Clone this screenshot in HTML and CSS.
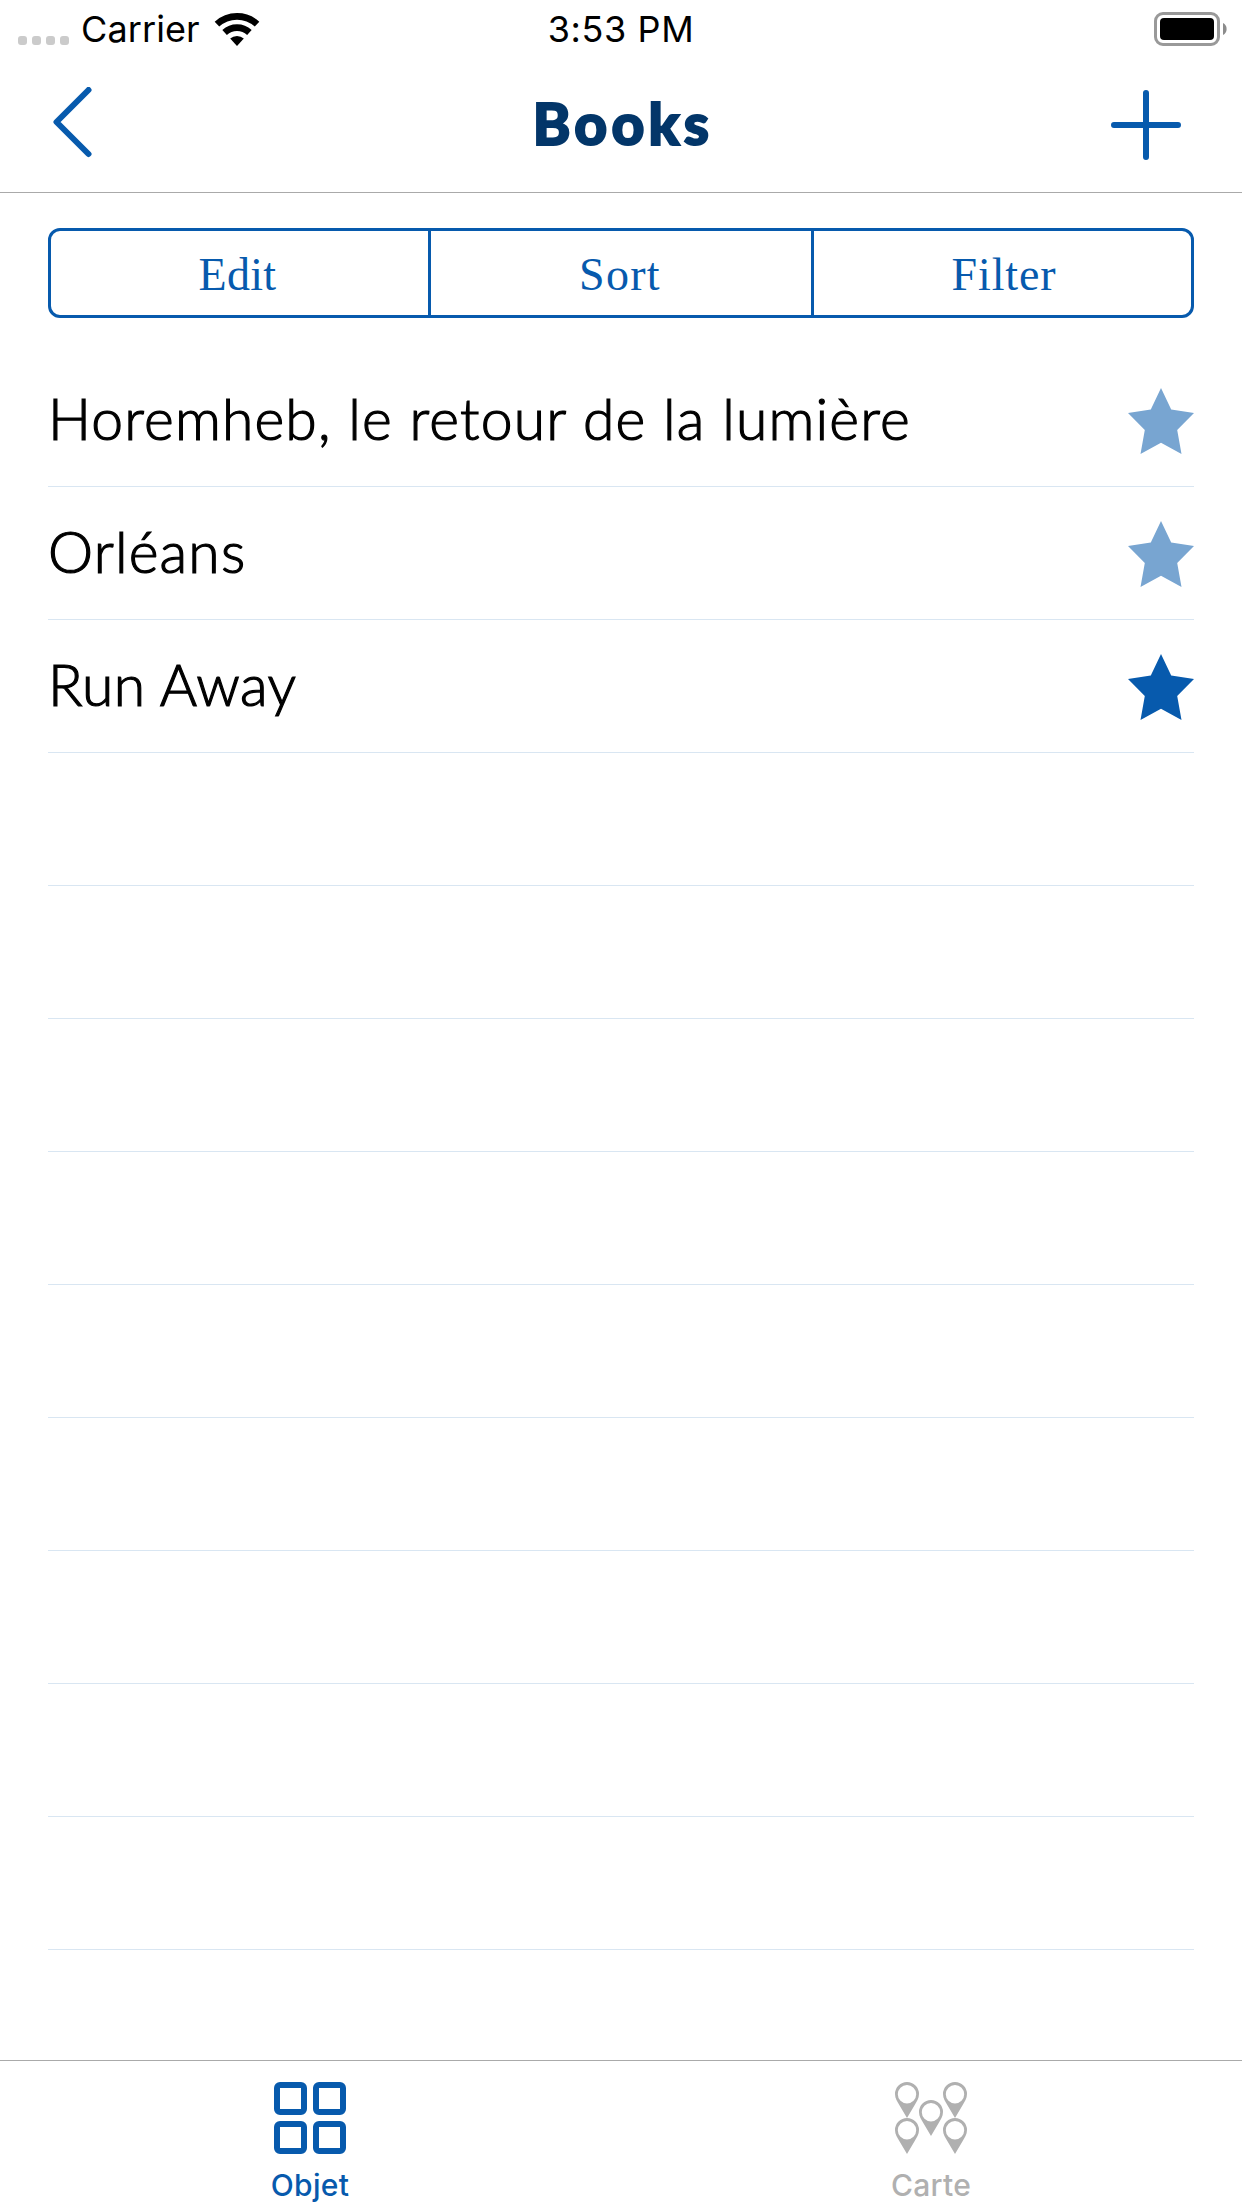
FILE: index.html
```html
<!DOCTYPE html>
<html lang="fr">
<head>
<meta charset="utf-8">
<title>Books</title>
<link rel="stylesheet" href="styles.css">
</head>
<body>
<svg class="defs" aria-hidden="true">
  <symbol id="star" viewBox="0 0 66 66"><path d="M33 0 43.2 21.5 66 25 49.2 42 53.5 66 33 54.8 12.5 66 16.8 42 0 25 22.8 21.5Z"/></symbol>
  <symbol id="pin" viewBox="0 0 24 36"><path fill-rule="evenodd" d="M12 0a12 12 0 0 1 12 12c0 4.500-2.500 7.500-4.300 11L12 36 4.300 23C2.500 19.500 0 16.500 0 12A12 12 0 0 1 12 0Zm0 3a9.200 9.200 0 1 0 0 18.400A9.200 9.200 0 0 0 12 3Z"/></symbol>
</svg>
<div class="app">
  <div class="status">
    <div class="status-left">
      <div class="signal"><i></i><i></i><i></i><i></i></div>
      <span class="carrier">Carrier</span>
      <svg class="wifi" width="46" height="33" viewBox="0 0 46 33">
        <g fill="none" stroke="#000" stroke-width="6.700">
          <path d="M2.960 11.150A29.650 29.650 0 0 1 43.040 11.150"/>
          <path d="M10.600 19.500A18.350 18.350 0 0 1 35.400 19.500"/>
        </g>
        <path d="M16.200 25.600A10 10 0 0 1 29.800 25.600L23 33Z"/>
      </svg>
    </div>
    <span class="time">3:53 PM</span>
    <svg class="battery" width="74" height="34" viewBox="0 0 74 34">
      <rect x="1.500" y="1.500" width="63" height="31" rx="7.500" fill="none" stroke="#999" stroke-width="3"/>
      <rect x="6" y="6" width="54" height="22" rx="4"/>
      <path d="M69 11a6.800 6.800 0 0 1 0 12Z" fill="#8c8c8c"/>
    </svg>
  </div>
  <header class="nav">
    <svg class="back" width="39" height="71" viewBox="0 0 39 71"><path d="M35.500 3 3.500 35 35.500 67"/></svg>
    <h1>Books</h1>
    <svg class="add" width="70" height="70" viewBox="0 0 70 70"><path d="M35 3V67M3 35H67"/></svg>
  </header>
  <main>
    <div class="segments">
      <button class="edit">Edit</button><button class="sort">Sort</button><button class="filter">Filter</button>
    </div>
    <ul class="list">
      <li><span>Horemheb, le retour de la lumière</span><svg class="star pale"><use href="#star"/></svg></li>
      <li><span>Orléans</span><svg class="star pale"><use href="#star"/></svg></li>
      <li><span class="tight">Run Away</span><svg class="star"><use href="#star"/></svg></li>
      <li></li><li></li><li></li><li></li><li></li><li></li><li></li><li></li><li></li>
    </ul>
  </main>
  <nav class="tabs">
    <a class="tab active">
      <svg width="72" height="72" viewBox="0 0 72 72">
        <path fill="currentColor" fill-rule="evenodd" d="M6 0H27a6 6 0 0 1 6 6V27a6 6 0 0 1-6 6H6a6 6 0 0 1-6-6V6A6 6 0 0 1 6 0ZM6 6V27H27V6ZM45 0H66a6 6 0 0 1 6 6V27a6 6 0 0 1-6 6H45a6 6 0 0 1-6-6V6A6 6 0 0 1 45 0ZM45 6V27H66V6ZM6 39H27a6 6 0 0 1 6 6V66a6 6 0 0 1-6 6H6a6 6 0 0 1-6-6V45A6 6 0 0 1 6 39ZM6 45V66H27V45ZM45 39H66a6 6 0 0 1 6 6V66a6 6 0 0 1-6 6H45a6 6 0 0 1-6-6V45A6 6 0 0 1 45 39ZM45 45V66H66V45Z"/></svg>
      <span>Objet</span>
    </a>
    <a class="tab">
      <svg width="72" height="72" viewBox="0 0 72 72" fill="currentColor">
        <use href="#pin" x="0" y="0" width="24" height="36"/>
        <use href="#pin" x="48" y="0" width="24" height="36"/>
        <use href="#pin" x="24" y="18" width="24" height="36"/>
        <use href="#pin" x="0" y="36" width="24" height="36"/>
        <use href="#pin" x="48" y="36" width="24" height="36"/>
      </svg>
      <span>Carte</span>
    </a>
  </nav>
</div>
</body>
</html>
```
FILE: styles.css
```css
* { box-sizing: border-box; }
body { margin: 0; background: #fff; color: #000; }
.defs { display: none; }
.app { display: flex; flex-direction: column; width: 1242px; height: 2208px; overflow: hidden; }

.status {
  display: grid; grid-template-columns: 1fr auto 1fr; align-items: center;
  height: 58px; padding: 0 14px 0 18px;
  font: 400 36px/58px Inter, sans-serif;
}
.status-left { display: flex; align-items: center; }
.signal { display: flex; gap: 5px; margin-top: 23px; }
.signal i { width: 9px; height: 9px; border-radius: 3px; background: #cbcbcb; }
.carrier { margin-left: 12px; letter-spacing: 0.1px; }
.wifi { margin-left: 14px; margin-top: 1px; }
.time { padding-right: 4px; letter-spacing: 0.6px; }
.battery { justify-self: end; }

.nav {
  display: grid; grid-template-columns: 1fr auto 1fr; align-items: start;
  height: 135px; padding: 29px 61px 0 53px;
  border-bottom: 1px solid #aaa;
}
.nav path { fill: none; stroke: #075aad; stroke-width: 6; stroke-linecap: round; stroke-linejoin: round; }
.nav h1 {
  margin: 1px 0 0; padding-left: 12px;
  font: 900 57px/70px Lato, sans-serif; letter-spacing: 4.2px;
  color: #033669; -webkit-text-stroke: 2px #033669;
}
.add { justify-self: end; margin-top: 3px; }

main { flex: 1; padding: 35px 48px 0; }
.segments {
  display: grid; grid-template-columns: 380px 383px 377px;
  height: 90px; border: 3px solid #075aad; border-radius: 12px;
}
.segments button {
  padding: 3px 0 0; border: 0; background: none;
  font: 400 46px/1 "Liberation Serif", serif; letter-spacing: 0.9px;
  color: #075aad;
}
.segments .edit { padding-right: 4px; letter-spacing: 0.3px; }
.segments .sort { padding-right: 2px; letter-spacing: 1.3px; }
.segments .filter { padding-left: 3px; }
.segments button:not(:last-child) { border-right: 3px solid #075aad; }

.list { margin: 36px 0 0; padding: 0; list-style: none; }
.list li {
  display: flex; align-items: center; justify-content: space-between;
  height: 133px; border-bottom: 1px solid #d9e6f2;
}
.list span {
  padding-bottom: 4px;
  font: 300 57px/1.2 Lato, sans-serif; letter-spacing: 1.17px;
  -webkit-text-stroke: 1.2px #000;
}
.list .tight { letter-spacing: 0.55px; }
.star { width: 66px; height: 66px; margin-top: 2px; fill: #075aad; }
.star.pale { fill: #78a5d1; }

.tabs {
  display: grid; grid-template-columns: 620px 622px;
  height: 148px; border-top: 1px solid #aaa;
}
.tab {
  display: flex; flex-direction: column; align-items: center;
  padding-top: 21px; color: #b0b0b0;
  font: 500 30px/36px Inter, sans-serif;
}
.tab span { margin-top: 13px; letter-spacing: 0.3px; }
.tab.active { color: #075aad; }
```
